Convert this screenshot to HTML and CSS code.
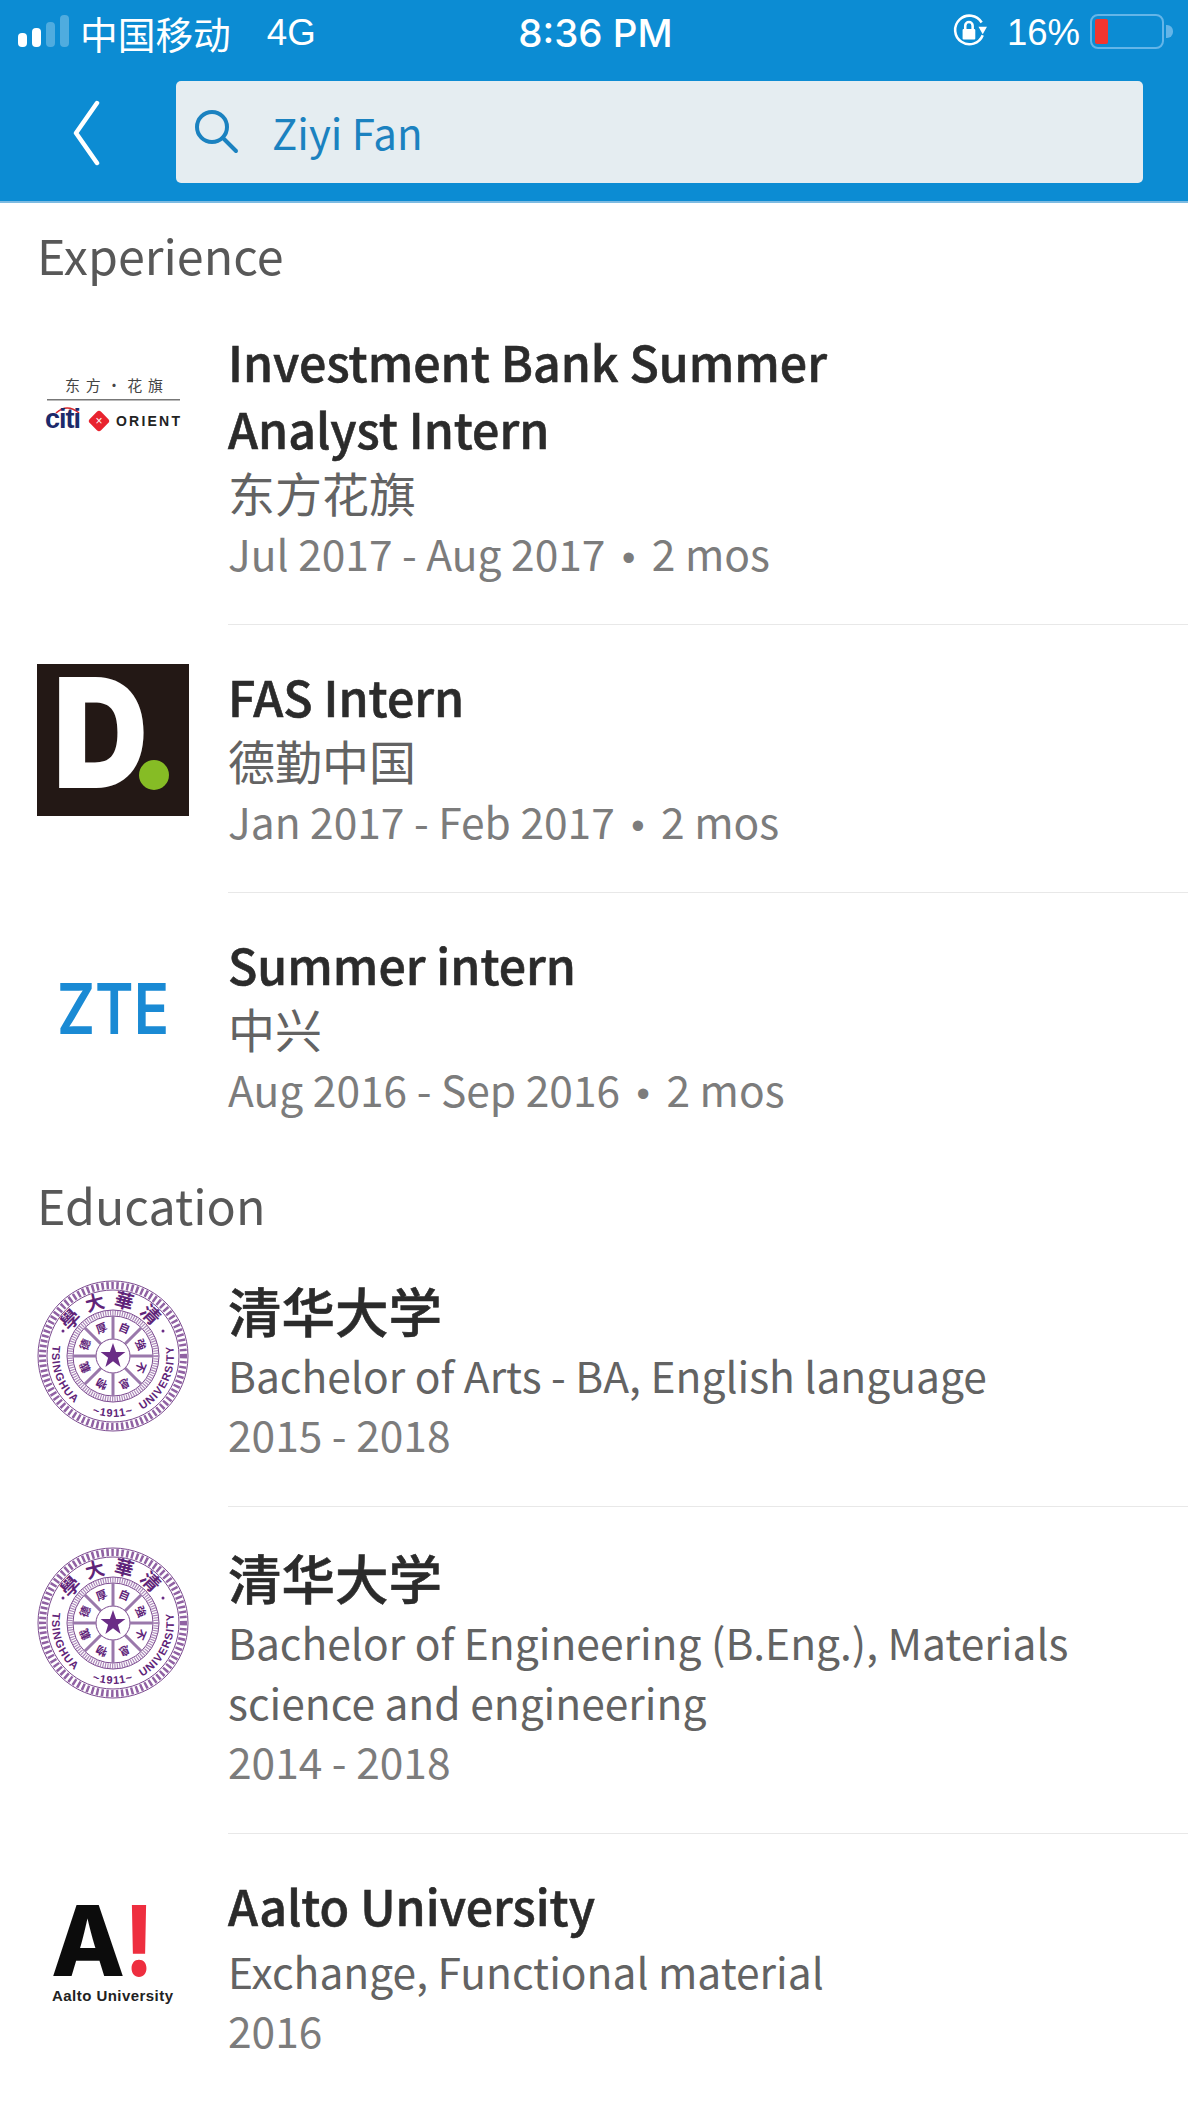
FILE: index.html
```html
<!DOCTYPE html>
<html lang="en">
<head>
  <meta charset="UTF-8" />
  <meta name="viewport" content="width=device-width, initial-scale=1" />
  <title>Ziyi Fan</title>
  <link rel="stylesheet" href="styles.css">
</head>
<body>

<header class="topbar">
  <div class="status">
    <div class="status-left">
      <span class="signal"><i class="on s1"></i><i class="on s2"></i><i class="s3"></i><i class="s4"></i></span>
      <span class="carrier">中国移动</span>
      <span class="net">4G</span>
    </div>
    <div class="clock">8:36 PM</div>
    <div class="status-right">
      <svg class="lock" viewBox="0 0 34 34" width="36" height="36">
        <path class="lock-ring" d="M29 21 A13.5 13.5 0 1 1 28 9" />
        <path class="lock-fill" d="M25 13 L33 13 L29 20 Z" />
        <rect class="lock-fill" x="10" y="15" width="12" height="10" rx="1" />
        <path class="lock-shackle" d="M12.5 15 V12 a3.5 3.5 0 0 1 7 0 V15" />
      </svg>
      <span class="percent">16%</span>
      <span class="battery"><i class="charge"></i></span>
      <span class="nub"></span>
    </div>
  </div>
  <div class="searchrow">
    <svg class="back" viewBox="0 0 30 66" width="30" height="66">
      <path d="M27 3 L6 33 L27 63" />
    </svg>
    <div class="searchbox">
      <svg class="glass" viewBox="0 0 44 44" width="44" height="44">
        <circle cx="17" cy="17" r="15" />
        <path d="M28 28 L41 41" />
      </svg>
      <span class="query">Ziyi Fan</span>
    </div>
  </div>
</header>

<main>
  <section class="section">
    <h2>Experience</h2>

    <div class="row">
      <svg class="logo" viewBox="0 0 152 152">
        <text class="citi-cn" x="28" y="62" textLength="98">东方·花旗</text>
        <rect class="citi-line" x="10" y="70" width="133" height="1.5" />
        <path class="citi-arc" d="M19 84 Q30 74 42 84" />
        <text class="citi-word" x="8" y="99" textLength="36">citi</text>
        <rect class="citi-mark" x="54" y="84" width="16" height="16" rx="3" transform="rotate(45 62 92)" />
        <text class="citi-x" x="62" y="96" text-anchor="middle">×</text>
        <text class="citi-orient" x="79" y="97" textLength="64">ORIENT</text>
      </svg>
      <div class="info">
        <div class="title">Investment Bank Summer<br>Analyst Intern</div>
        <div class="sub cn">东方花旗</div>
        <div class="meta">Jul 2017 - Aug 2017 <b>•</b> 2 mos</div>
      </div>
    </div>

    <div class="row">
      <svg class="logo" viewBox="0 0 152 152">
        <rect class="del-bg" width="152" height="152" />
        <text class="del-d" x="16" y="124" textLength="95" lengthAdjust="spacingAndGlyphs">D</text>
        <circle class="del-dot" cx="117" cy="111" r="15" />
      </svg>
      <div class="info">
        <div class="title">FAS Intern</div>
        <div class="sub cn">德勤中国</div>
        <div class="meta">Jan 2017 - Feb 2017 <b>•</b> 2 mos</div>
      </div>
    </div>

    <div class="row">
      <svg class="logo" viewBox="0 0 152 152">
        <text class="zte" x="20" y="102" textLength="112" lengthAdjust="spacingAndGlyphs">ZTE</text>
      </svg>
      <div class="info last">
        <div class="title">Summer intern</div>
        <div class="sub cn">中兴</div>
        <div class="meta">Aug 2016 - Sep 2016 <b>•</b> 2 mos</div>
      </div>
    </div>
  </section>

  <section class="section edu">
    <h2>Education</h2>

    <div class="row">
      <svg class="logo" viewBox="0 0 152 152">
        <g id="seal">
          <circle class="seal-thin" cx="76" cy="76" r="75" />
          <circle class="seal-rope" cx="76" cy="76" r="70.5" />
          <circle class="seal-thin" cx="76" cy="76" r="66" />
          <circle class="seal-rope2" cx="76" cy="76" r="43" />
          <circle class="seal-thin" cx="76" cy="76" r="46" />
          <circle class="seal-thin" cx="76" cy="76" r="40" />
          <circle class="seal-thin" cx="76" cy="76" r="17" />
          <path class="seal-spokes" d="M76 36 V59 M76 93 V116 M36 76 H59 M93 76 H116 M47.7 47.7 L64 64 M88 88 L104.3 104.3 M104.3 47.7 L88 64 M64 88 L47.7 104.3" />
          <path class="seal-star" d="M76 63 L79.1 72 L88.4 72 L80.9 77.7 L83.6 87 L76 81.3 L68.4 87 L71.1 77.7 L63.6 72 L72.9 72 Z" />
          <circle class="seal-star" cx="26" cy="51" r="1.5" />
          <circle class="seal-star" cx="126" cy="51" r="1.5" />
          <path id="arcTop" class="seal-guide" d="M27 76 A49 49 0 0 1 125 76" />
          <path id="arcBot" class="seal-guide" d="M15.9 65.4 A61 61 0 1 0 136.1 65.4" />
          <text class="seal-cn"><textPath href="#arcTop" startOffset="50%" text-anchor="middle">學大華清</textPath></text>
          <text class="seal-en"><textPath href="#arcBot" startOffset="0">TSINGHUA</textPath></text>
          <text class="seal-en"><textPath href="#arcBot" startOffset="50%" text-anchor="middle">~1911~</textPath></text>
          <text class="seal-en"><textPath href="#arcBot" startOffset="100%" text-anchor="end">UNIVERSITY</textPath></text>
          <text class="seal-in" transform="rotate(22.5 76 76)" x="76" y="50">自</text>
          <text class="seal-in" transform="rotate(67.5 76 76)" x="76" y="50">強</text>
          <text class="seal-in" transform="rotate(112.5 76 76)" x="76" y="50">不</text>
          <text class="seal-in" transform="rotate(157.5 76 76)" x="76" y="50">息</text>
          <text class="seal-in" transform="rotate(202.5 76 76)" x="76" y="50">物</text>
          <text class="seal-in" transform="rotate(247.5 76 76)" x="76" y="50">載</text>
          <text class="seal-in" transform="rotate(292.5 76 76)" x="76" y="50">德</text>
          <text class="seal-in" transform="rotate(337.5 76 76)" x="76" y="50">厚</text>
        </g>
      </svg>
      <div class="info">
        <div class="title cn">清华大学</div>
        <div class="sub">Bachelor of Arts - BA, English language</div>
        <div class="meta">2015 - 2018</div>
      </div>
    </div>

    <div class="row">
      <svg class="logo" viewBox="0 0 152 152"><use href="#seal" /></svg>
      <div class="info">
        <div class="title cn">清华大学</div>
        <div class="sub">Bachelor of Engineering (B.Eng.), Materials<br>science and engineering</div>
        <div class="meta">2014 - 2018</div>
      </div>
    </div>

    <div class="row">
      <svg class="logo" viewBox="0 0 152 152">
        <text class="aalto-a" x="14" y="102" textLength="74" lengthAdjust="spacingAndGlyphs">A</text>
        <text class="aalto-bang" x="88" y="102" textLength="28" lengthAdjust="spacingAndGlyphs">!</text>
        <text class="aalto-name" x="15" y="127" textLength="121">Aalto University</text>
      </svg>
      <div class="info last">
        <div class="title">Aalto University</div>
        <div class="sub">Exchange, Functional material</div>
        <div class="meta">2016</div>
      </div>
    </div>
  </section>
</main>

</body>
</html>
```

FILE: styles.css
```css
* { box-sizing: border-box; }
html, body {
  height: 2112px;
  overflow: hidden;
}
body {
  margin: 0;
  background: white;
  font-family: "Noto Sans CJK SC", "Noto Sans", sans-serif;
  color: #2b2b2b;
}

/* top blue bar */
.topbar {
  background-color: #0c8cd3;
  height: 203px;
  border-bottom: 2px solid #7dbbe2;
  color: white;
}
.status {
  height: 62px;
  padding: 0 15px 0 18px;
  display: grid;
  grid-template-columns: 1fr auto 1fr;
  align-items: center;
}
.status-left, .status-right {
  display: flex;
  align-items: center;
}
.status-right { justify-content: flex-end; }
.signal {
  display: flex;
  align-items: flex-end;
  gap: 5px;
  height: 32px;
  margin-right: 11px;
}
.signal i {
  display: block;
  width: 9px;
  border-radius: 4px;
  background: rgba(255,255,255,0.28);
}
.signal .on { background: white; }
.signal .s1 { height: 14px; }
.signal .s2 { height: 19px; }
.signal .s3 { height: 25px; }
.signal .s4 { height: 32px; }
.carrier {
  font-size: 37.7px;
  font-weight: 400;
  line-height: 40px;
  margin-top: 4px;
}
.net {
  font-family: "Liberation Sans", sans-serif;
  font-size: 36.7px;
  margin-top: 4px;
  margin-left: 36px;
}
.clock {
  font-family: Inter, sans-serif;
  font-size: 38.5px;
  font-weight: 500;
  margin-top: 4px;
}
.lock { margin-right: 19px; }
.lock-ring, .lock-shackle {
  fill: none;
  stroke: white;
  stroke-width: 2.4;
}
.lock-fill { fill: white; }
.percent {
  font-family: "Liberation Sans", sans-serif;
  font-size: 36.5px;
  margin-top: 4px;
  margin-right: 10px;
}
.battery {
  display: block;
  width: 74px;
  height: 35px;
  border: 2px solid #64b5e8;
  border-radius: 8px;
  padding: 3px;
}
.charge {
  display: block;
  width: 13px;
  height: 100%;
  background: #f2352e;
  border-radius: 2px;
}
.nub {
  width: 7px;
  height: 13px;
  margin-left: 2px;
  background: #64b5e8;
  border-radius: 0 6px 6px 0;
}
.searchrow {
  display: flex;
  align-items: flex-start;
  padding: 19px 45px 0 70px;
}
.back {
  margin-top: 19px;
  margin-right: 76px;
}
.back path {
  fill: none;
  stroke: white;
  stroke-width: 4.5;
  stroke-linecap: round;
  stroke-linejoin: round;
}
.searchbox {
  flex: 1;
  height: 102px;
  background: #e5edf1;
  border-radius: 5px;
  display: flex;
  align-items: center;
  padding-left: 19px;
}
.glass { margin-right: 33px; }
.glass circle, .glass path {
  fill: none;
  stroke: #1b82c0;
  stroke-width: 4;
  stroke-linecap: round;
}
.query {
  font-size: 42px;
  color: #1b82c0;
  margin-top: -2px;
}

/* list */
.section { padding-top: 18px; }
.section.edu { padding-top: 11px; }
h2 {
  margin: 0 0 3px;
  padding-left: 37px;
  font-size: 48.4px;
  font-weight: 400;
  line-height: 66px;
  color: #585858;
}
.row {
  display: flex;
  align-items: flex-start;
  padding-left: 37px;
}
.logo {
  flex: none;
  width: 152px;
  height: 152px;
  margin-top: 39px;
  margin-right: 39px;
}
.edu .logo { margin-top: 40px; }
.info {
  flex: 1;
  padding: 38px 0 41px;
  border-bottom: 1px solid #e8e8e8;
}
.edu .info { padding-bottom: 42px; }
.info.last { border-bottom: none; }
.title {
  font-size: 48.3px;
  font-weight: 500;
  -webkit-text-stroke: 0.6px #2b2b2b;
  line-height: 67px;
  color: #2b2b2b;
}
.title.cn {
  font-size: 53.5px;
  margin: -2px 0 2px;
}
.sub {
  font-size: 42.5px;
  line-height: 60px;
  color: #636363;
}
.edu .sub { margin-top: 2px; }
.sub.cn { font-size: 47px; }
.meta {
  font-size: 42.5px;
  line-height: 60px;
  margin-top: 1px;
  color: #7c7c7c;
}
.edu .meta { margin-top: -1px; }
.meta b {
  font-family: "Liberation Sans", sans-serif;
  font-size: 38px;
  font-weight: 400;
  line-height: 0;
  margin: 0 7px;
}

/* logos */
.citi-cn { font-size: 15px; fill: #444; }
.citi-line { fill: #777; }
.citi-arc { fill: none; stroke: #d8262c; stroke-width: 1.6; }
.citi-word { font-family: "Liberation Sans", sans-serif; font-size: 27px; font-weight: bold; fill: #1c2a6b; }
.citi-mark { fill: #e8232f; }
.citi-x { font-family: "Liberation Sans", sans-serif; font-size: 12px; fill: white; }
.citi-orient { font-family: "Liberation Sans", sans-serif; font-size: 14px; font-weight: bold; fill: #222; }
.del-bg { fill: #231815; }
.del-d { font-family: Inter, sans-serif; font-size: 152px; font-weight: 900; fill: white; }
.del-dot { fill: #86bc25; }
.zte { font-family: Inter, sans-serif; font-size: 70px; font-weight: 600; fill: #1a8ad4; }
.aalto-a { font-family: Inter, sans-serif; font-size: 97px; font-weight: 800; fill: #0c0c0c; }
.aalto-bang { font-family: Inter, sans-serif; font-size: 97px; font-weight: 800; fill: #ee2e3f; }
.aalto-name { font-family: "Liberation Sans", sans-serif; font-size: 15px; font-weight: bold; fill: #222; }
.seal-thin { fill: none; stroke: #7b4a8f; stroke-width: 1; }
.seal-rope { fill: none; stroke: #74398c; stroke-width: 7; stroke-dasharray: 2.5 2.5; opacity: 0.8; }
.seal-rope2 { fill: none; stroke: #74398c; stroke-width: 5; stroke-dasharray: 1.2 1.2; opacity: 0.6; }
.seal-spokes { fill: none; stroke: #9a78ab; stroke-width: 3; }
.seal-star { fill: #6a2c86; }
.seal-guide { fill: none; stroke: none; }
.seal-cn { font-size: 19px; font-weight: 700; letter-spacing: 7px; fill: #5f2479; }
.seal-en { font-family: "Liberation Sans", sans-serif; font-size: 11px; font-weight: bold; letter-spacing: 1px; fill: #5f2479; }
.seal-in { font-size: 11px; font-weight: 700; fill: #5f2479; text-anchor: middle; }
```
